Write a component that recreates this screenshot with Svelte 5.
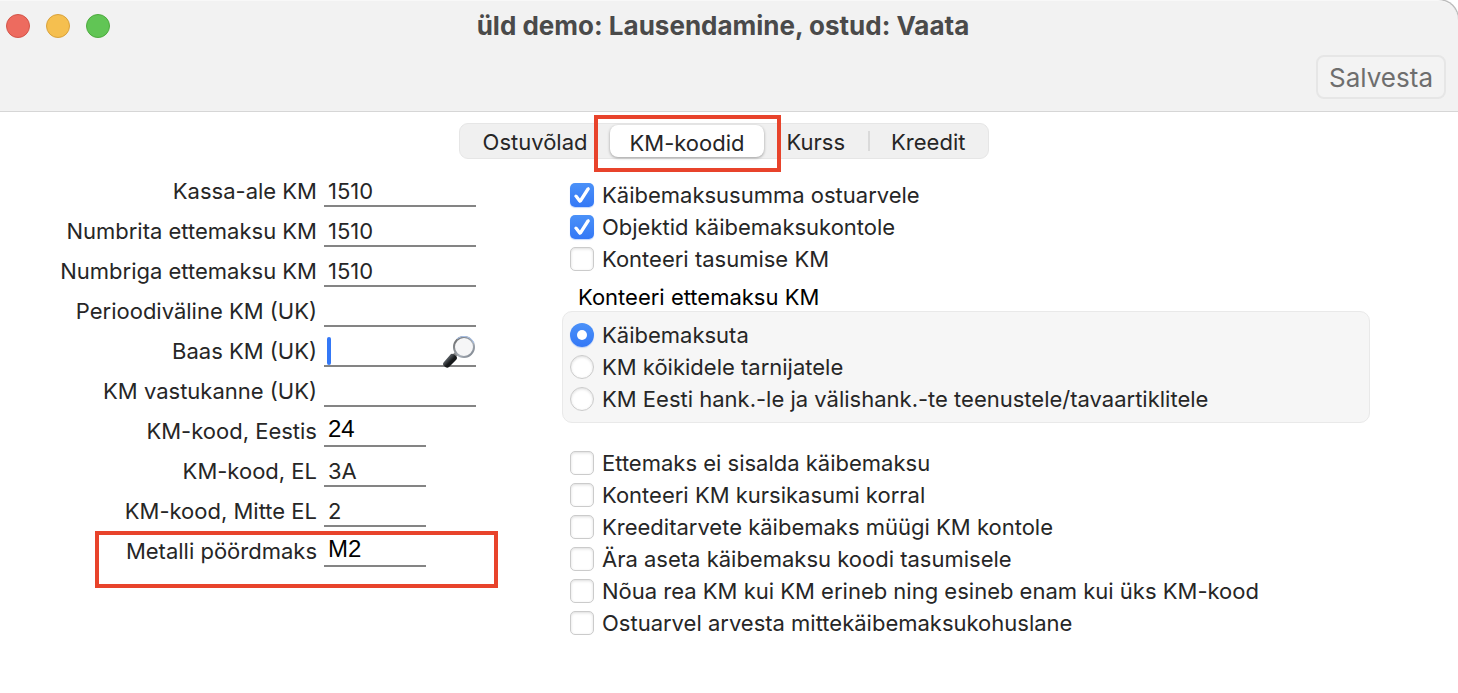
<div class="window">
  <header>
    <div class="title-bar">
      <div class="lights">
        <button class="light close" aria-label="Sulge"></button>
        <button class="light minimize" aria-label="Minimeeri"></button>
        <button class="light zoom" aria-label="Suurenda"></button>
      </div>
      <h1>üld demo: Lausendamine, ostud: Vaata</h1>
    </div>
    <div class="toolbar">
      <button class="save-btn">Salvesta</button>
    </div>
  </header>

  <nav>
    <div class="tabs" role="tablist">
      {#each tabs as tab}
        <button
          class="tab"
          class:active={tab === activeTab}
          role="tab"
          aria-selected={tab === activeTab}
          on:click={() => (activeTab = tab)}
        >{tab}</button>
      {/each}
      <span class="mark tab-mark"></span>
    </div>
  </nav>

  <main>
    <form class="accounts">
      {#each fields as field}
        <div class="field">
          <label for={field.id}>{field.label}</label>
          <div class="value" class:short={field.short}>
            <input id={field.id} class:large={field.large} type="text" bind:value={field.value}>
            {#if field.search}
              <span class="caret"></span>
              <button class="search-btn" type="button" aria-label="Otsi">
                <svg viewBox="0 0 34 34" width="34" height="34">
                  <defs>
                    <linearGradient id="handle" x1="0" y1="0" x2="1" y2="1">
                      <stop offset="0" stop-color="#111" />
                      <stop offset="0.35" stop-color="#50555a" />
                      <stop offset="0.55" stop-color="#16181a" />
                    </linearGradient>
                    <linearGradient id="rim" x1="0" y1="0" x2="1" y2="1">
                      <stop offset="0" stop-color="#666" />
                      <stop offset="0.6" stop-color="#a9b0b9" />
                      <stop offset="1" stop-color="#777d86" />
                    </linearGradient>
                  </defs>
                  <path d="M12 21 L15 18" stroke="#888" stroke-width="4" />
                  <path d="M9 19 Q11 18 14 21 Q16 23 14 25 L7 32 Q5 34 2 31 Q0 29 2 27 Z" fill="url(#handle)" />
                  <circle cx="22" cy="12" r="10" fill="#f6f6f7" stroke="url(#rim)" stroke-width="2" />
                  <path d="M15 4 A11 11 0 0 1 32 8" fill="none" stroke="#a9c4ee" stroke-width="1" />
                </svg>
              </button>
            {/if}
          </div>
          {#if field.marked}
            <span class="mark field-mark"></span>
          {/if}
        </div>
      {/each}
    </form>

    <section class="options">
      {#each topOptions as option}
        <label class="option">
          <input type="checkbox" bind:checked={option.checked}>
          <span>{option.label}</span>
        </label>
      {/each}

      <fieldset>
        <legend>Konteeri ettemaksu KM</legend>
        <div class="group">
          {#each prepayment as label, i}
            <label class="option">
              <input type="radio" name="prepayment" value={i} bind:group={selected}>
              <span>{label}</span>
            </label>
          {/each}
        </div>
      </fieldset>

      {#each bottomOptions as option}
        <label class="option">
          <input type="checkbox" bind:checked={option.checked}>
          <span>{option.label}</span>
        </label>
      {/each}
    </section>
  </main>
</div>

<script lang="ts">
  type Field = {
    id: string;
    label: string;
    value: string;
    short?: boolean;
    large?: boolean;
    search?: boolean;
    marked?: boolean;
  };

  const tabs = ["Ostuvõlad", "KM-koodid", "Kurss", "Kreedit"];
  let activeTab = "KM-koodid";

  let fields: Field[] = [
    { id: "kassa-ale", label: "Kassa-ale KM", value: "1510" },
    { id: "numbrita", label: "Numbrita ettemaksu KM", value: "1510" },
    { id: "numbriga", label: "Numbriga ettemaksu KM", value: "1510" },
    { id: "perioodivaline", label: "Perioodiväline KM (UK)", value: "" },
    { id: "baas", label: "Baas KM (UK)", value: "", search: true },
    { id: "vastukanne", label: "KM vastukanne (UK)", value: "" },
    { id: "eestis", label: "KM-kood, Eestis", value: "24", short: true, large: true },
    { id: "el", label: "KM-kood, EL", value: "3A", short: true },
    { id: "mitte-el", label: "KM-kood, Mitte EL", value: "2", short: true },
    { id: "metall", label: "Metalli pöördmaks", value: "M2", short: true, large: true, marked: true },
  ];

  let topOptions = [
    { label: "Käibemaksusumma ostuarvele", checked: true },
    { label: "Objektid käibemaksukontole", checked: true },
    { label: "Konteeri tasumise KM", checked: false },
  ];

  const prepayment = [
    "Käibemaksuta",
    "KM kõikidele tarnijatele",
    "KM Eesti hank.-le ja välishank.-te teenustele/tavaartiklitele",
  ];
  let selected = 0;

  let bottomOptions = [
    { label: "Ettemaks ei sisalda käibemaksu", checked: false },
    { label: "Konteeri KM kursikasumi korral", checked: false },
    { label: "Kreeditarvete käibemaks müügi KM kontole", checked: false },
    { label: "Ära aseta käibemaksu koodi tasumisele", checked: false },
    { label: "Nõua rea KM kui KM erineb ning esineb enam kui üks KM-kood", checked: false },
    { label: "Ostuarvel arvesta mittekäibemaksukohuslane", checked: false },
  ];
</script>

<style>
  :global(body) {
    background: #fff;
  }
  .window {
    font-family: Inter, "Liberation Sans", sans-serif;
    font-size: 22px;
    line-height: 32px;
    color: #262626;
  }
  button,
  input {
    font: inherit;
    color: inherit;
    box-sizing: border-box;
  }
  header {
    background: #f2f2f2;
    border-bottom: 1px solid #d6d6d6;
    border-top: 1px solid #f8f8f8;
    border-top-right-radius: 20px;
    box-shadow: 1px -1px 0 #bbb;
    padding-bottom: 12px;
  }
  .title-bar {
    display: grid;
    grid-template-columns: 120px 1fr 138px;
    align-items: center;
    height: 50px;
    padding-left: 6px;
    box-sizing: border-box;
  }
  .lights {
    display: flex;
    gap: 16px;
  }
  .light {
    width: 24px;
    height: 24px;
    padding: 0;
    border-radius: 50%;
    border: 1px solid;
  }
  .close {
    background: #ed6b5f;
    border-color: #d35549;
  }
  .minimize {
    background: #f5bf4f;
    border-color: #d9a23c;
  }
  .zoom {
    background: #61c555;
    border-color: #4dab3e;
  }
  h1 {
    margin: 0;
    font-size: 26px;
    line-height: 32px;
    font-weight: 700;
    color: #4a4a4a;
    text-align: center;
  }
  .toolbar {
    display: flex;
    justify-content: flex-end;
    padding: 4px 12px 0;
  }
  .save-btn {
    height: 44px;
    padding: 2px 11px 0;
    font-size: 26px;
    color: #6e6e6e;
    background: #f3f3f3;
    border: 2px solid #e6e6e6;
    border-radius: 8px;
  }
  nav {
    display: flex;
    justify-content: center;
    padding: 11px 10px 8px 0;
  }
  .tabs {
    position: relative;
    display: flex;
    height: 36px;
    box-sizing: border-box;
    background: #f0f0f0;
    border: 1px solid #e6e6e6;
    border-radius: 9px;
  }
  .tab {
    position: relative;
    padding: 2px 23px 0;
    background: transparent;
    border: none;
    border-radius: 8px;
  }
  .tab.active {
    background: #fff;
    padding: 2px 19px 0;
    margin: 1px 0;
    box-shadow: 0 1px 3px rgba(0, 0, 0, 0.35);
  }
  .tab:last-of-type::before {
    content: "";
    position: absolute;
    left: 0;
    top: 7px;
    width: 2px;
    height: 20px;
    background: #dadada;
  }
  .mark {
    position: absolute;
    box-sizing: border-box;
    border: 4px solid #e8432b;
    pointer-events: none;
  }
  .tab-mark {
    left: 134px;
    top: -9px;
    width: 187px;
    height: 57px;
  }
  main {
    display: grid;
    grid-template-columns: 476px 1fr;
    gap: 86px;
    padding-right: 88px;
  }
  .field {
    position: relative;
    display: grid;
    grid-template-columns: 317px 152px;
    gap: 7px;
    height: 40px;
  }
  .field label {
    text-align: right;
    padding-top: 8px;
    white-space: nowrap;
  }
  .value {
    position: relative;
    box-sizing: border-box;
    height: 40px;
    padding-top: 8px;
    border-bottom: 2px solid #848484;
  }
  .value.short {
    width: 102px;
  }
  .value input {
    width: 100%;
    height: 32px;
    padding: 0 4px;
    display: block;
    border: none;
    outline: none;
    background: transparent;
  }
  .value input.large {
    height: 28px;
    font-family: "Liberation Sans", sans-serif;
    font-size: 24px;
    color: #000;
  }
  .caret {
    position: absolute;
    left: 3px;
    bottom: 0;
    width: 4px;
    height: 28px;
    border-radius: 2px;
    background: #3478f6;
  }
  .search-btn {
    position: absolute;
    right: 0;
    bottom: -4px;
    width: 34px;
    height: 34px;
    padding: 0;
    border: none;
    background: transparent;
  }
  .search-btn svg {
    display: block;
  }
  .field-mark {
    left: 95px;
    top: 4px;
    width: 403px;
    height: 57px;
  }
  .options {
    padding-top: 12px;
  }
  .option {
    display: flex;
    align-items: center;
    gap: 8px;
    height: 32px;
    padding-left: 8px;
  }
  .option input {
    appearance: none;
    flex: none;
    display: grid;
    place-items: center;
    width: 24px;
    height: 24px;
    margin: 0;
    background: #fff;
    border: 1px solid #cbcbcb;
    border-radius: 5px;
    box-shadow: inset 0 1px 3px rgba(0, 0, 0, 0.14);
  }
  .option input[type="radio"] {
    border-radius: 50%;
  }
  .option input:checked {
    border: none;
    background: linear-gradient(#4b91f8, #3478f6);
    box-shadow: 0 1px 1px rgba(52, 120, 246, 0.3);
  }
  .option input[type="checkbox"]:checked::before {
    content: "";
    width: 16px;
    height: 16px;
    background: #fff;
    clip-path: polygon(0 57%, 10% 47%, 20% 50%, 37% 72%, 80% 4%, 93% 0, 100% 12%, 48% 94%, 36% 100%, 28% 94%);
  }
  .option input[type="radio"]:checked::before {
    content: "";
    width: 10px;
    height: 10px;
    border-radius: 50%;
    background: #fff;
  }
  fieldset {
    min-width: 0;
    margin: 8px 0 24px;
    padding: 0;
    border: none;
  }
  legend {
    padding: 0 0 0 16px;
    line-height: 28px;
    color: #000;
  }
  .group {
    padding: 7px 0;
    background: #f6f6f6;
    border: 1px solid #e9e9e9;
    border-radius: 10px;
  }
  .group .option {
    padding-left: 7px;
  }
</style>
